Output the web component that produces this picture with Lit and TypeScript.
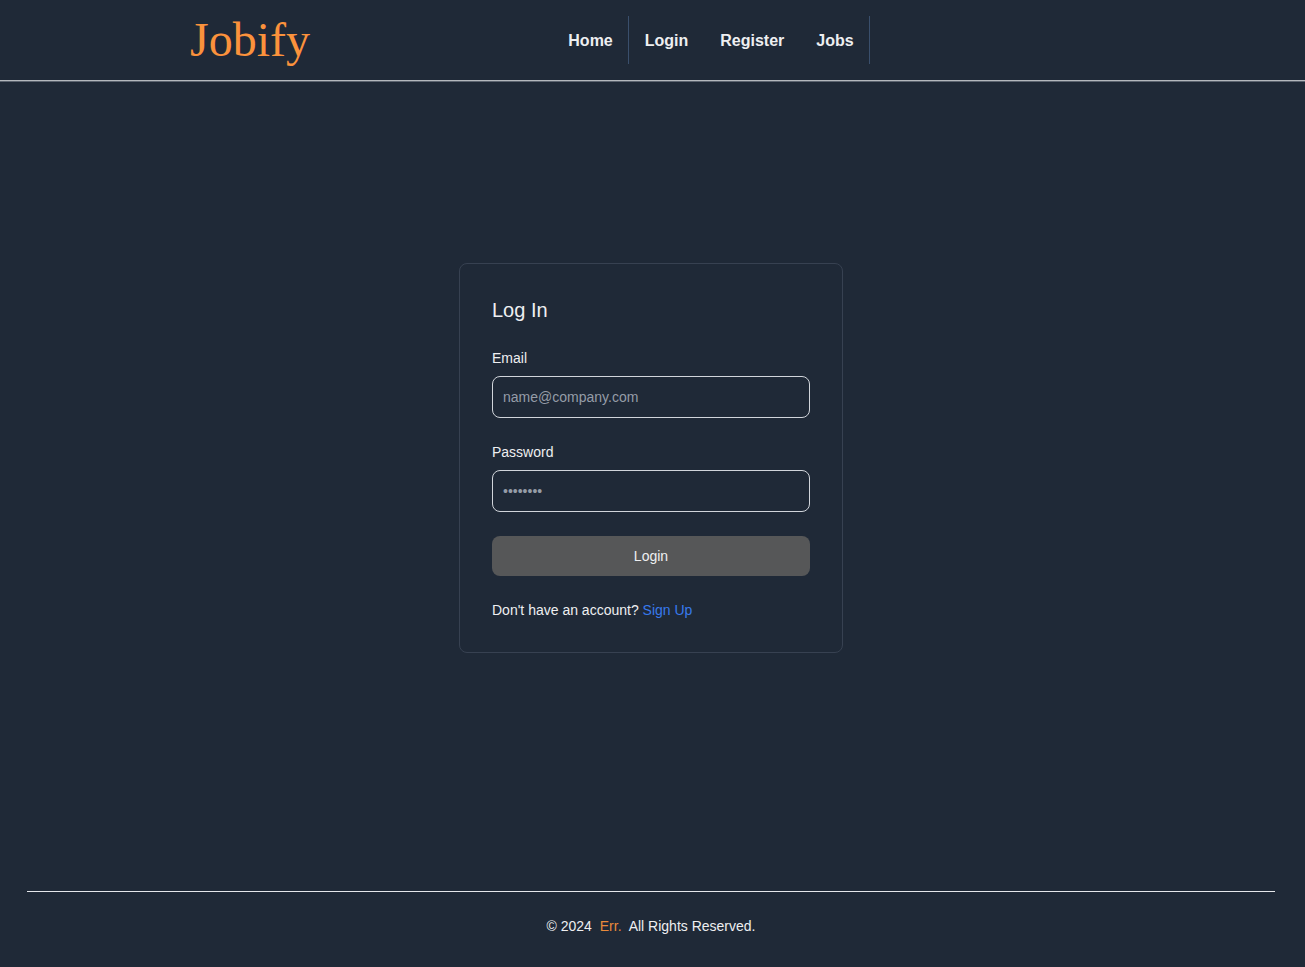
import { LitElement, html, css } from "lit";
import { customElement } from "lit/decorators.js";

@customElement("app-root")
export class AppRoot extends LitElement {
  static styles = css`
    :host {
      display: flex;
      flex-direction: column;
      box-sizing: border-box;
      min-height: 100vh;
      background: #1f2937;
      color: #eeeff1;
      font-family: "Liberation Sans", Arial, sans-serif;
      font-size: 14px;
      line-height: 20px;
    }
    *,
    *::after {
      box-sizing: border-box;
    }
    a {
      color: inherit;
      text-decoration: none;
    }
    .header {
      display: flex;
      align-items: center;
      justify-content: space-around;
      height: 81px;
      padding: 0 72px 0 69px;
      border-bottom: 1px solid #b4b8bd;
      box-shadow: 0 1px 0 #5c6470;
    }
    .header::after {
      content: "";
    }
    .logo {
      color: #fb923c;
      font-family: "Liberation Serif", "Times New Roman", serif;
      font-size: 48px;
      line-height: 48px;
    }
    .menu {
      display: flex;
      margin: 0;
      padding: 0;
      list-style: none;
      font-size: 16px;
      font-weight: 700;
      line-height: 24px;
    }
    .menu a {
      display: block;
      padding: 13px 16px 11px;
    }
    .divided {
      box-shadow: inset -1px 0 0 #3a4f6c;
    }
    .main {
      flex: 1;
      display: flex;
      align-items: center;
      justify-content: center;
      padding: 24px 3px 80px 0;
    }
    .card {
      display: flex;
      flex-direction: column;
      gap: 24px;
      width: 100%;
      max-width: 384px;
      padding: 32px;
      border: 1px solid #374151;
      border-radius: 8px;
    }
    .title {
      margin: 0;
      font-size: 20px;
      font-weight: 400;
      line-height: 28px;
    }
    .field {
      display: flex;
      flex-direction: column;
      gap: 8px;
    }
    .input {
      width: 100%;
      height: 42px;
      margin: 0;
      padding: 10px;
      border: 1px solid #d1d5db;
      border-radius: 8px;
      background: transparent;
      color: inherit;
      font: inherit;
    }
    .input::placeholder {
      color: #959ca7;
      opacity: 1;
    }
    .submit {
      height: 40px;
      padding: 10px 20px;
      border: 0;
      border-radius: 8px;
      background: #565758;
      color: inherit;
      font: inherit;
      cursor: pointer;
    }
    .note {
      margin: 0;
    }
    .note a {
      color: #387aec;
    }
    .footer {
      margin: 0 30px 0 27px;
      padding: 24px 0 31px;
      border-top: 1px solid #e5e7eb;
      text-align: center;
    }
    .brand {
      margin: 0 4px;
      color: #ea8a3b;
    }
  `;

  render() {
    return html`
      <header class="header">
        <a class="logo" href="#">Jobify</a>
        <nav>
          <ul class="menu">
            <li class="divided"><a href="#home">Home</a></li>
            <li><a href="#login">Login</a></li>
            <li><a href="#register">Register</a></li>
            <li class="divided"><a href="#jobs">Jobs</a></li>
          </ul>
        </nav>
      </header>
      <main class="main">
        <form class="card" @submit=${(e: Event) => e.preventDefault()}>
          <h1 class="title">Log In</h1>
          <div class="field">
            <label for="email">Email</label>
            <input class="input" id="email" type="email" placeholder="name@company.com" />
          </div>
          <div class="field">
            <label for="password">Password</label>
            <input class="input" id="password" type="password" placeholder="••••••••" />
          </div>
          <button class="submit" type="submit">Login</button>
          <p class="note">Don't have an account? <a href="#register">Sign Up</a></p>
        </form>
      </main>
      <footer class="footer">
        © 2024 <a class="brand" href="#">Err.</a> All Rights Reserved.
      </footer>
    `;
  }
}
